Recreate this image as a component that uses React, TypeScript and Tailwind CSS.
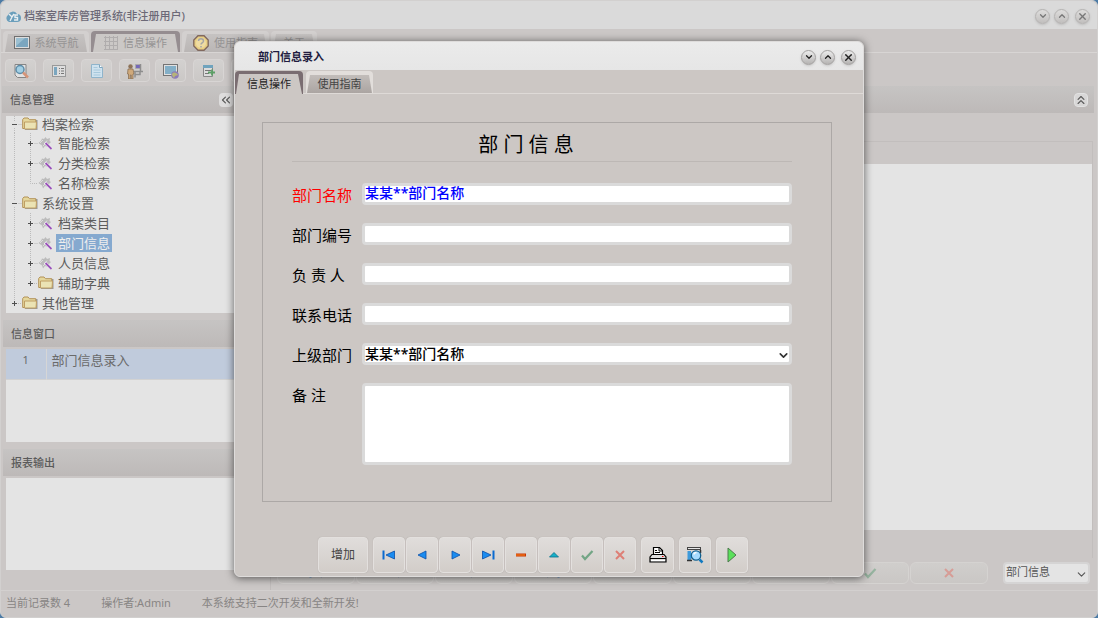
import React from 'react';
import { ChevronDown, ChevronUp, X, ChevronsLeft, ChevronsUp } from 'lucide-react';

const ICONS: Record<string, React.ReactNode> = {
  first: (
    <>
      <path d="M2.500 3.500v9" stroke="#0a6ad0" strokeWidth="2" />
      <path d="M13.500 4v8L5 8z" fill="#1b8cf0" stroke="#0a4fa8" strokeWidth=".8" />
    </>
  ),
  prev: <path d="M12 4v8L4 8z" fill="#1b8cf0" stroke="#0a4fa8" strokeWidth=".8" />,
  next: <path d="M5 4v8l8-4z" fill="#1b8cf0" stroke="#0a4fa8" strokeWidth=".8" />,
  last: (
    <>
      <path d="M2.500 4v8L11 8z" fill="#1b8cf0" stroke="#0a4fa8" strokeWidth=".8" />
      <path d="M13.500 3.500v9" stroke="#0a6ad0" strokeWidth="2" />
    </>
  ),
  minus: (
    <>
      <path d="M3 6.500h10v3H3z" fill="#c83400" />
      <path d="M3 7.500h9v1H3z" fill="#ff8a20" />
    </>
  ),
  up: <path d="M3.500 10 8 5.500l4.500 4.500z" fill="#16b0c8" stroke="#08708c" strokeWidth=".8" />,
  check: <path d="m3 8.500 3 3.500 7.500-8" fill="none" stroke="#72a585" strokeWidth="2.200" />,
  cross: <path d="m4 4 8 8M12 4l-8 8" fill="none" stroke="#de7f76" strokeWidth="2" />,
};

function Glyph({ name, className = '' }: { name: string; className?: string }) {
  return (
    <svg viewBox="0 0 16 16" className={`size-4 shrink-0 ${className}`}>
      {ICONS[name]}
    </svg>
  );
}

const Monitor = () => (
  <svg viewBox="0 0 16 14" className="h-[14px] w-4">
    <rect x=".5" y=".5" width="15" height="12" fill="#ddd" stroke="#6f6f6f" />
    <rect x="2" y="2" width="12" height="9" fill="#7ba6bf" />
    <path d="M2 2h9l-9 8z" fill="#9cc0d2" />
  </svg>
);

const GridIcon = () => (
  <svg viewBox="0 0 14 14" className="size-[14px]">
    <path d="M0 1.500h14M0 5.500h14M0 9.500h14M0 13.500h14M1.500 0v14M5.500 0v14M9.500 0v14M13.500 0v14" stroke="#b0adad" />
  </svg>
);

const HelpIcon = () => (
  <svg viewBox="0 0 16 16" className="size-4">
    <path d="M5 .8h6L15.200 5v6L11 15.200H5L.8 11V5z" fill="#e8cf84" stroke="#81695f" strokeWidth="1.400" />
    <circle cx="8" cy="8" r="5" fill="#efdca2" />
    <path d="M5.500 6C5.500 3 10.500 3 10.500 6c0 2-2.500 1.800-2.500 3.500M8 11v1.500" fill="none" stroke="#a5a5a5" strokeWidth="1.500" />
  </svg>
);

const TOOL_ICONS: React.ReactNode[] = [
  <>
    <path d="M2 1.500h11v13H4.500L2 12z" fill="#e2e2e2" stroke="#858585" />
    <circle cx="7" cy="6.500" r="4" fill="#a2cfe4" stroke="#5d8ca8" strokeWidth="1.500" />
    <path d="m10 9.500 5 5" stroke="#d59478" strokeWidth="2.500" />
  </>,
  <>
    <rect x="1.500" y="2.500" width="13" height="11" fill="#dedede" stroke="#999" />
    <path d="M3 4h3v8H3z" fill="#7ba6bf" />
    <path d="M8 5.500h1m1 0h3M8 8h1m1 0h3M8 10.500h1m1 0h3" stroke="#777" />
  </>,
  <>
    <path d="M2.500 1.500h8l3 3v10h-11z" fill="#cfe2ee" stroke="#8fb4cb" />
    <path d="M10.500 1.500v3h3" fill="#fff" stroke="#7da4bd" />
    <path d="M4.500 4.500h4M4.500 7h7M4.500 9.500h7M4.500 12h7" stroke="#a6c8dc" />
  </>,
  <>
    <circle cx="3.500" cy="3.500" r="2.200" fill="#8d7359" />
    <path d="M1 6h5l1 5H6v5H4.200v-4h-.9v4H1.500v-5H.5z" fill="#cfa97b" stroke="#83684d" strokeWidth=".7" />
    <path d="M8.500 1.500h5v4h-5z" fill="#7568ba" stroke="#aaa" />
    <path d="M13.500 1v7M7 8.500h9M8 8.500v6M8 11.500h5V9" fill="none" stroke="#8e8e8e" strokeWidth="1.500" />
  </>,
  <>
    <rect x=".5" y="1.500" width="14" height="11" fill="#e0e0e0" stroke="#747474" />
    <rect x="2" y="3" width="11" height="8" fill="#83afc7" />
    <circle cx="12" cy="12" r="3.800" fill="#8b7bb8" />
    <path d="M9 11c2-3 5-1 6 1l-3 1-1 2c-1-1-2-2-2-4" fill="#b6b478" />
  </>,
  <>
    <path d="M2.500 2.500h9v11h-9z" fill="#dcdcdc" stroke="#888" />
    <path d="M2 2h10v3H2z" fill="#6fa3bd" />
    <path d="M4 7.500h6M4 10.500h4" stroke="#777" />
    <path d="M7 9.500h7M11 6.500v6" stroke="#5c9f66" strokeWidth="1.800" />
  </>,
  null,
];

function ToolButton({ icon }: { icon: React.ReactNode }) {
  return (
    <button className="flex h-[23px] w-[31px] shrink-0 items-center justify-center rounded border border-[#d8d5d4] bg-gradient-to-b from-[#d3d1d0] to-[#cbc8c6]">
      <svg viewBox="0 0 16 16" className="size-4">{icon}</svg>
    </button>
  );
}

type TabProps = { label: string; icon?: React.ReactNode; active?: boolean; className: string };

function MainTab({ label, icon, active, className }: TabProps) {
  return (
    <button
      className={`mt-[2px] flex rounded-t-sm px-[2px] pt-[3px] ${active ? 'bg-[#958d90]' : 'bg-[#d3d0cf]'} ${className}`}
    >
      <span
        className={`flex h-[18px] w-full items-center justify-center gap-[5px] text-[11px] text-[#969494] [clip-path:polygon(3px_0,calc(100%-3px)_0,100%_100%,0_100%)] ${
          active ? 'bg-[#cbc8c6]' : 'bg-gradient-to-b from-[#c6c3c2] to-[#bab6b5]'
        }`}
      >
        {icon}
        {label}
      </span>
    </button>
  );
}

function RoundButton({ children, dim, label, className = '' }: { children: React.ReactNode; dim?: boolean; label: string; className?: string }) {
  return (
    <button
      aria-label={label}
      className={`flex size-[15px] items-center justify-center rounded-full border bg-gradient-to-b shadow-sm ${
        dim ? 'border-[#b4b2b1] from-[#dedddc] to-[#c1bfbe] text-[#777]' : 'border-[#a3a1a0] from-[#ececec] to-[#b5b3b2] text-[#222]'
      } ${className}`}
    >
      {children}
    </button>
  );
}

function WindowButtons({ dim }: { dim?: boolean }) {
  return (
    <div className="flex items-center gap-1">
      <RoundButton dim={dim} label="最小化"><ChevronDown size={10} strokeWidth={3} /></RoundButton>
      <RoundButton dim={dim} label="最大化"><ChevronUp size={10} strokeWidth={3} /></RoundButton>
      <RoundButton dim={dim} label="关闭" className="ml-[2px]"><X size={11} strokeWidth={3} /></RoundButton>
    </div>
  );
}

const Folder = () => (
  <svg viewBox="0 0 16 14" className="h-[14px] w-4 shrink-0">
    <path d="M3 3h12.500v10H3z" fill="#999" />
    <path d="M.7 11.500v-9L2 1h4l1.500 1.700h6.300v8.800z" fill="#e5d79c" stroke="#b39257" />
    <path d="M2.500 5h12L14 12H2.500z" fill="#ebe3b4" stroke="#bf9e64" />
  </svg>
);

const Wizard = () => (
  <svg viewBox="0 0 16 14" className="h-[14px] w-4 shrink-0">
    <path d="M.5 7 3 5l1-2.500 2 .5L7.500 1l1.500 2 3-1-.5 3 1.500 1-2 2-1 3-3-1-2 2.500L4 9.500z" fill="#bcbcbc" />
    <path d="m2 7 3-3M6.500 8 9 4.500M5 10l2-2" stroke="#dedede" />
    <path d="m7 6.500 6.500 6.500" stroke="#f3f3f3" strokeWidth="3" />
    <path d="m7.500 7 6 6" stroke="#9a55ba" strokeWidth="1.800" />
  </svg>
);

type Node = { text: string; level: number; mark?: '+' | '-'; folder?: boolean; last?: boolean; selected?: boolean };

const NODES: Node[] = [
  { text: '档案检索', level: 0, mark: '-', folder: true },
  { text: '智能检索', level: 1, mark: '+' },
  { text: '分类检索', level: 1, mark: '+' },
  { text: '名称检索', level: 1, last: true },
  { text: '系统设置', level: 0, mark: '-', folder: true },
  { text: '档案类目', level: 1, mark: '+' },
  { text: '部门信息', level: 1, mark: '+', selected: true },
  { text: '人员信息', level: 1, mark: '+' },
  { text: '辅助字典', level: 1, mark: '+', folder: true, last: true },
  { text: '其他管理', level: 0, mark: '+', folder: true, last: true },
];

function TreeRow({ node }: { node: Node }) {
  return (
    <li className="flex h-5 items-center first:h-[17px] first:pb-px">
      {node.level === 1 && (
        <svg viewBox="0 0 16 20" className="h-5 w-4 shrink-0">
          <path d="M8.500 0v20" stroke="#bbb" strokeDasharray="1 1" />
        </svg>
      )}
      <svg viewBox="0 0 16 20" className="h-5 w-4 shrink-0">
        <path d={node.last ? 'M8.500 0v10.500H16' : 'M8.500 0v20M8.500 10.500H16'} fill="none" stroke="#bbb" strokeDasharray="1 1" />
        {node.mark && <path d="M5 7h7v7H5z" fill="#e4e4e4" />}
        {node.mark && <path d={node.mark === '+' ? 'M6 10.500h5M8.500 8v5' : 'M6 10.500h5'} stroke="#505050" />}
      </svg>
      {node.folder ? <Folder /> : <Wizard />}
      <span
        className={`ml-[2px] px-[2px] text-[13px] leading-4 ${node.selected ? 'bg-[#85a9cf] py-px text-[#eeeeee]' : 'text-[#5c5c5c]'}`}
      >
        {node.text}
      </span>
    </li>
  );
}

function PanelHeader({ title, children }: { title: string; children?: React.ReactNode }) {
  return (
    <div className="flex h-[27px] shrink-0 items-center justify-between bg-gradient-to-b from-[#c6c4c3] to-[#bdb9b8] pt-px pl-2 text-[11px] font-medium text-[#5a5a5a]">
      <span>{title}</span>
      {children}
    </div>
  );
}

function Sidebar() {
  return (
    <aside className="flex w-[269px] shrink-0 flex-col border-r border-[#c0bcbb] pb-5">
      <PanelHeader title="信息管理">
        <button aria-label="折叠" className="mr-[37px] flex size-[14px] items-center justify-center rounded-sm bg-[#dedddd]">
          <ChevronsLeft size={14} />
        </button>
      </PanelHeader>
      <div className="mt-[3px] ml-1 overflow-hidden bg-[#e4e4e4]">
        <ul>
          {NODES.map((n) => <TreeRow key={n.text} node={n} />)}
        </ul>
      </div>
      <div className="mt-[7px] ml-px"><PanelHeader title="信息窗口" /></div>
      <div className="mt-[2px] ml-1 h-[93px] shrink-0 bg-[#e4e4e4]">
        <table className="w-full border-collapse">
          <tbody>
            <tr className="h-[30px] border-b border-[#d2d2d2] bg-[#c0cbdc] align-top text-[#6a6a6a]">
              <td className="w-[40px] border-r border-[#d6d6d6] text-center text-[11px] leading-[22px]">1</td>
              <td className="pl-[5px] text-[13px] leading-[22px]">部门信息录入</td>
            </tr>
          </tbody>
        </table>
      </div>
      <div className="mt-[7px] ml-px"><PanelHeader title="报表输出" /></div>
      <div className="mt-[2px] ml-1 flex-1 bg-[#e4e4e4]" />
    </aside>
  );
}

const RECORD_ICONS = ['first', 'prev', 'next', 'last', 'minus', 'up', 'minus', 'check', 'cross'];

function Workspace() {
  return (
    <main className="ml-[3px] flex min-w-0 flex-1 flex-col">
      <div className="mr-[3px]">
        <PanelHeader title="部门信息">
          <button aria-label="收起" className="mr-[6px] flex size-[14px] items-center justify-center rounded-sm border border-[#e2e2e2] bg-[#d8d7d7]">
            <ChevronsUp size={14} className="shrink-0" />
          </button>
        </PanelHeader>
      </div>
      <div className="mt-7 mr-1 flex flex-1 flex-col border-x border-t border-[#c2bebd] pt-[22px] pb-7">
        <div className="flex-1 bg-[#e4e4e4]" />
      </div>
      <div className="mt-1 mr-[7px] mb-[6px] flex h-[22px] items-center justify-between gap-3">
        <div className="ml-[3px] flex max-w-[711px] flex-1 gap-px">
          {RECORD_ICONS.map((name, i) => (
            <button
              key={i}
              className="flex h-[22px] flex-1 items-center justify-center rounded-md border border-[#d5d3d1] bg-gradient-to-b from-[#d0cecc] to-[#cac7c5]"
            >
              <Glyph name={name} className="opacity-60" />
            </button>
          ))}
        </div>
        <div className="relative w-[87px]">
          <select
            aria-label="模块"
            className="block h-[22px] w-full appearance-none rounded-sm border-2 border-[#d5d4d4] bg-[#e4e4e4] px-px pb-[2px] text-[11px] text-[#555]"
          >
            <option>部门信息</option>
          </select>
          <ChevronDown size={13} className="pointer-events-none absolute top-[6px] right-[2px] text-[#555]" />
        </div>
      </div>
    </main>
  );
}

function Field({ id, label, required, children }: { id: string; label: string; required?: boolean; children: React.ReactNode }) {
  return (
    <div className="flex items-start">
      <label htmlFor={id} className={`w-[70px] shrink-0 text-[15px] leading-6 whitespace-pre ${required ? 'text-[#ff0000]' : 'text-black'}`}>
        {label}
      </label>
      {children}
    </div>
  );
}

const INPUT =
  'block h-[22px] w-full min-w-0 rounded border-[3px] border-[#dadada] bg-white text-[14px] font-medium outline-none';

const DialogButton = ({ children, className = 'w-[32px]' }: { children: React.ReactNode; className?: string }) => (
  <button
    className={`flex h-9 shrink-0 items-center justify-center rounded border border-[#e3e0de] bg-gradient-to-b from-[#e0dddb] to-[#d2cdc9] shadow-[0_0_1px_#aaa5a2] ${className}`}
  >
    {children}
  </button>
);

const Printer = () => (
  <svg viewBox="0 0 18 18" className="size-[18px]">
    <path d="M4.500 8V1.500h6l3 3V8" fill="#fff" stroke="#000" strokeWidth="1.200" />
    <path d="M10 1.500V5h3M6 4.500h2M6 6.500h5" fill="none" stroke="#000" />
    <path d="M3 8.500h12l2 2.500v5H1v-5z" fill="#ddd" stroke="#000" strokeWidth="1.200" />
    <path d="M1 12.500h16" stroke="#000" />
    <path d="M2 14.500h14" stroke="#fff" />
    <path d="M13 10.500h1.500" stroke="#e00" />
  </svg>
);

const Preview = () => (
  <svg viewBox="0 0 18 18" className="size-[18px]">
    <path d="M1 1h14v3H1z" fill="#444" />
    <path d="M2 2.500h12" stroke="#e6e6e6" />
    <path d="M1.500 5h3.500v9H1.500z" fill="#3d9adb" />
    <path d="M1 14.500h5M14.500 4v3" stroke="#333" strokeWidth="1.500" />
    <circle cx="10" cy="9.500" r="4.700" fill="#a8dcff" stroke="#14618f" strokeWidth="1.300" />
    <path d="M8 8.500c0-1.500 1-2 2.500-2" fill="none" stroke="#fff" strokeWidth="1.500" />
    <path d="m13.500 13.500 3 3" stroke="#137ac0" strokeWidth="2.500" />
  </svg>
);

function EntryDialog() {
  return (
    <section
      role="dialog"
      aria-label="部门信息录入"
      className="flex w-[630px] flex-col overflow-hidden rounded-md border border-[#dedcdb] bg-[#ccc7c4] shadow-[0_1px_9px_rgba(0,0,0,0.6)]"
    >
      <header className="flex h-7 items-center justify-between bg-gradient-to-b from-[#ebebeb] to-[#e6e6e6] pt-[2px] pr-[7px] pl-[23px]">
        <h2 className="text-[11px] font-semibold text-[#221c40]">部门信息录入</h2>
        <WindowButtons />
      </header>
      <nav className="flex h-[24px] items-start gap-[3px] border-b border-[#dedad7] pt-px">
        <button className="flex h-[23px] w-[68px] rounded-t-sm bg-[#7a6d71] px-px pt-[3px]">
          <span className="flex h-5 w-full items-center justify-center bg-[#ccc7c4] pt-px text-[11px] text-[#222] [clip-path:polygon(3px_0,calc(100%-4px)_0,100%_100%,0_100%)]">
            信息操作
          </span>
        </button>
        <button className="flex h-[22px] w-[67px] rounded-t-sm bg-[#e2dedb] px-px pt-1">
          <span className="flex h-[18px] w-full items-center justify-center bg-gradient-to-b from-[#c2bdba] to-[#aba5a2] pt-px text-[11px] text-[#444] [clip-path:polygon(3px_0,calc(100%-3px)_0,100%_100%,0_100%)]">
            使用指南
          </span>
        </button>
      </nav>
      <form className="mt-7 mr-[31px] ml-[27px] border border-[#aca8a6] pr-[39px] pb-9 pl-[29px]" onSubmit={(e) => e.preventDefault()}>
        <h1 className="border-b border-[#bdb8b5] pt-[9px] pr-[32px] pb-[3px] text-center text-[20px] leading-[26px] text-black">部 门 信 息</h1>
        <div className="mt-[21px] flex flex-col gap-4">
          <Field id="name" label="部门名称" required>
            <input id="name" defaultValue="某某**部门名称" className={`${INPUT} pb-[4px] leading-none text-[#0000ff]`} />
          </Field>
          <Field id="code" label="部门编号">
            <input id="code" className={INPUT} />
          </Field>
          <Field id="owner" label="负 责 人">
            <input id="owner" className={INPUT} />
          </Field>
          <Field id="phone" label="联系电话">
            <input id="phone" className={INPUT} />
          </Field>
          <Field id="parent" label="上级部门">
            <div className="relative w-full">
              <select id="parent" className={`${INPUT} appearance-none leading-4 text-black`}>
                <option>某某**部门名称</option>
              </select>
              <ChevronDown size={13} strokeWidth={3} className="pointer-events-none absolute top-[6px] right-[2px] text-[#333]" />
            </div>
          </Field>
          <Field id="note" label="备 注">
            <textarea id="note" className="block h-[82px] w-full resize-none rounded border-[3px] border-[#dadada] bg-white text-[14px] outline-none" />
          </Field>
        </div>
      </form>
      <div className="mt-[35px] mb-[3px] ml-[83px] flex gap-[5px]">
        <DialogButton className="w-[50px] text-[12px] text-[#444]">增加</DialogButton>
        <div className="flex gap-px">
          {['first', 'prev', 'next', 'last', 'minus', 'up', 'check', 'cross'].map((name) => (
            <DialogButton key={name}><Glyph name={name} /></DialogButton>
          ))}
        </div>
        <DialogButton className="w-[33px]"><Printer /></DialogButton>
        <DialogButton><Preview /></DialogButton>
        <DialogButton>
          <svg viewBox="0 0 16 16" className="size-4">
            <path d="M4 1v14l8-7z" fill="#5be05b" stroke="#4d7a4d" />
          </svg>
        </DialogButton>
      </div>
    </section>
  );
}

export default function App() {
  return (
    <div className="relative flex min-h-screen bg-[#4d7ba5] font-['Noto_Sans','Noto_Sans_CJK_SC',sans-serif]">
      <div className="flex min-w-0 flex-1 flex-col rounded-md border border-[#d2d0cf] bg-[#cbc7c6]">
        <header className="flex h-7 items-center justify-between rounded-t-md bg-[#dadada] pt-[2px] pr-[7px] pl-1">
          <div className="flex items-center gap-[3px]">
            <svg viewBox="0 0 16 14" className="h-[14px] w-4">
              <path d="M4 13a4 4 0 0 1-1-7 5 5 0 0 1 9-1 4 4 0 0 1 0 8z" fill="#6a9ebb" />
              <path d="m4 5 3 3 2-3M7 8l-2 4M13 6h-3v2.500h2.500V11H9" fill="none" stroke="#e9eef1" strokeWidth="1.400" />
            </svg>
            <h1 className="text-[11px] font-medium text-[#6c6977]">档案室库房管理系统(非注册用户)</h1>
          </div>
          <WindowButtons dim />
        </header>
        <nav className="flex h-[24px] border-b border-[#d8d5d4] pl-[2px]">
          <MainTab label="系统导航" icon={<Monitor />} className="w-[86px]" />
          <MainTab label="信息操作" icon={<GridIcon />} active className="ml-[2px] w-[89px]" />
          <MainTab label="使用指南" icon={<HelpIcon />} className="ml-[2px] w-[87px]" />
          <MainTab label="关于" className="ml-[2px] w-[46px]" />
        </nav>
        <div className="flex h-[33px] items-start gap-[5px] pt-[6px] pl-1">
          <div className="flex gap-[7px]">
            {TOOL_ICONS.slice(0, 4).map((icon, i) => <ToolButton key={i} icon={icon} />)}
          </div>
          <div className="flex gap-[7px]">
            {TOOL_ICONS.slice(4).map((icon, i) => <ToolButton key={i} icon={icon} />)}
          </div>
        </div>
        <div className="flex flex-1 pl-px">
          <Sidebar />
          <Workspace />
        </div>
        <footer className="flex h-[27px] items-center gap-[31px] border-t border-[#d3d0cf] pb-px pl-[5px] text-[11px] text-[#888584]">
          <span>当前记录数 4</span>
          <span>操作者:Admin</span>
          <span>本系统支持二次开发和全新开发!</span>
        </footer>
      </div>
      <div className="absolute inset-0 flex items-center justify-center">
        <EntryDialog />
      </div>
    </div>
  );
}
